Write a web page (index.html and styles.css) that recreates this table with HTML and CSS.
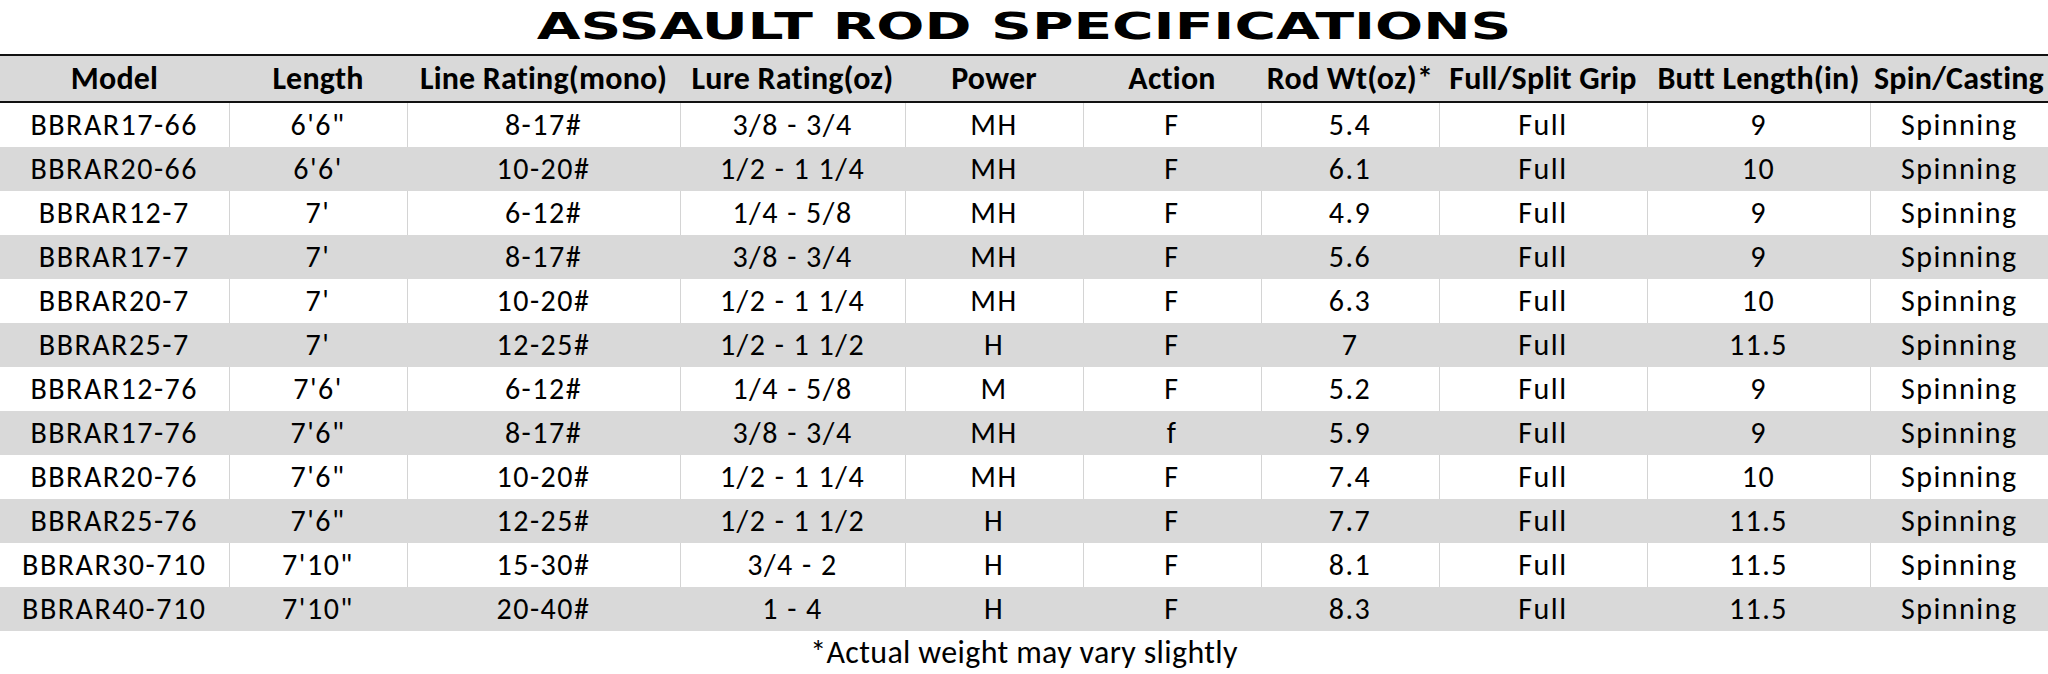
FILE: index.html
```html
<!DOCTYPE html>
<html lang="en">
<head>
<meta charset="utf-8">
<title>Assault Rod Specifications</title>
<link rel="stylesheet" href="styles.css">
</head>
<body>
<h1 class="title"><span class="title-text">ASSAULT ROD SPECIFICATIONS</span></h1>
<table class="specs">
  <colgroup>
    <col class="c-model"><col class="c-length"><col class="c-line"><col class="c-lure"><col class="c-power">
    <col class="c-action"><col class="c-wt"><col class="c-grip"><col class="c-butt"><col class="c-spin">
  </colgroup>
  <thead>
    <tr><th>Model</th><th>Length</th><th>Line Rating(mono)</th><th>Lure Rating(oz)</th><th>Power</th><th>Action</th><th>Rod Wt(oz)*</th><th>Full/Split Grip</th><th>Butt Length(in)</th><th>Spin/Casting</th></tr>
  </thead>
  <tbody>
    <tr><td>BBRAR17-66</td><td>6'6"</td><td>8-17#</td><td>3/8 - 3/4</td><td>MH</td><td>F</td><td>5.4</td><td>Full</td><td>9</td><td>Spinning</td></tr>
    <tr><td>BBRAR20-66</td><td>6'6'</td><td>10-20#</td><td>1/2 - 1 1/4</td><td>MH</td><td>F</td><td>6.1</td><td>Full</td><td>10</td><td>Spinning</td></tr>
    <tr><td>BBRAR12-7</td><td>7'</td><td>6-12#</td><td>1/4 - 5/8</td><td>MH</td><td>F</td><td>4.9</td><td>Full</td><td>9</td><td>Spinning</td></tr>
    <tr><td>BBRAR17-7</td><td>7'</td><td>8-17#</td><td>3/8 - 3/4</td><td>MH</td><td>F</td><td>5.6</td><td>Full</td><td>9</td><td>Spinning</td></tr>
    <tr><td>BBRAR20-7</td><td>7'</td><td>10-20#</td><td>1/2 - 1 1/4</td><td>MH</td><td>F</td><td>6.3</td><td>Full</td><td>10</td><td>Spinning</td></tr>
    <tr><td>BBRAR25-7</td><td>7'</td><td>12-25#</td><td>1/2 - 1 1/2</td><td>H</td><td>F</td><td>7</td><td>Full</td><td>11.5</td><td>Spinning</td></tr>
    <tr><td>BBRAR12-76</td><td>7'6'</td><td>6-12#</td><td>1/4 - 5/8</td><td>M</td><td>F</td><td>5.2</td><td>Full</td><td>9</td><td>Spinning</td></tr>
    <tr><td>BBRAR17-76</td><td>7'6"</td><td>8-17#</td><td>3/8 - 3/4</td><td>MH</td><td>f</td><td>5.9</td><td>Full</td><td>9</td><td>Spinning</td></tr>
    <tr><td>BBRAR20-76</td><td>7'6"</td><td>10-20#</td><td>1/2 - 1 1/4</td><td>MH</td><td>F</td><td>7.4</td><td>Full</td><td>10</td><td>Spinning</td></tr>
    <tr><td>BBRAR25-76</td><td>7'6"</td><td>12-25#</td><td>1/2 - 1 1/2</td><td>H</td><td>F</td><td>7.7</td><td>Full</td><td>11.5</td><td>Spinning</td></tr>
    <tr><td>BBRAR30-710</td><td>7'10"</td><td>15-30#</td><td>3/4 - 2</td><td>H</td><td>F</td><td>8.1</td><td>Full</td><td>11.5</td><td>Spinning</td></tr>
    <tr><td>BBRAR40-710</td><td>7'10"</td><td>20-40#</td><td>1 - 4</td><td>H</td><td>F</td><td>8.3</td><td>Full</td><td>11.5</td><td>Spinning</td></tr>
  </tbody>
</table>
<p class="note">*Actual weight may vary slightly</p>
</body>
</html>
```

FILE: styles.css
```css
html, body {
  margin: 0;
  padding: 0;
  background: #ffffff;
}

body {
  width: 2048px;
  font-family: "Carlito", "Lato", sans-serif;
  color: #000000;
}

.title {
  margin: 0;
  height: 54px;
  display: flex;
  justify-content: center;
  align-items: flex-start;
  font-family: "DejaVu Sans", sans-serif;
  font-weight: bold;
  font-size: 38px;
  line-height: 1;
}

.title-text {
  display: inline-block;
  transform: scaleX(1.49);
  transform-origin: center;
  padding-top: 7px;
}

.specs {
  width: 2048px;
  border-collapse: collapse;
  table-layout: fixed;
}

.c-model { width: 229px; }
.c-length { width: 178px; }
.c-line { width: 273px; }
.c-lure { width: 225px; }
.c-power { width: 178px; }
.c-action { width: 178px; }
.c-wt { width: 178px; }
.c-grip { width: 208px; }
.c-butt { width: 223px; }
.c-spin { width: 178px; }

.specs th {
  background: #d9d9d9;
  border-top: 2px solid #111111;
  border-bottom: 2px solid #111111;
  height: 45px;
  padding: 0;
  font-size: 32px;
  font-weight: bold;
  letter-spacing: 0.2px;
  line-height: 45px;
  text-align: center;
  white-space: nowrap;
}

.specs td {
  height: 44px;
  padding: 0;
  font-size: 30px;
  letter-spacing: 1.5px;
  line-height: 44px;
  text-align: center;
  white-space: nowrap;
  border-right: 1px solid #d4d4d4;
}

.specs td:last-child {
  border-right: none;
}

.specs tbody tr:nth-child(even) td {
  background: #d9d9d9;
  border-right-color: #d9d9d9;
}

.note {
  margin: 0;
  text-align: center;
  font-size: 32px;
  letter-spacing: 0.35px;
  line-height: 44px;
}
```
